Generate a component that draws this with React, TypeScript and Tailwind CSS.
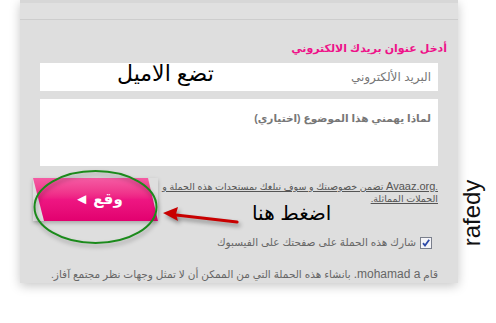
import React from 'react';

const AR = "font-['Liberation_Sans','DejaVu_Sans',sans-serif]";

function CheckBox() {
  return (
    <svg width="12" height="12" viewBox="0 0 12 12" className="shrink-0">
      <rect x="0.5" y="0.5" width="11" height="11" fill="#f4f4f8" stroke="#7a7f8c" />
      <path d="M3 6.2 L5 8.6 L9.2 2.8" fill="none" stroke="#2d4aa8" strokeWidth="1.8" />
    </svg>
  );
}

// green circle drawn around the sign button
function Ellipse() {
  return (
    <svg
      width="132"
      height="80"
      viewBox="0 0 132 80"
      className="absolute left-[30px] top-[168px] drop-shadow-[1px_3px_2px_rgba(0,0,0,0.3)]"
    >
      <ellipse cx="65.5" cy="39" rx="61" ry="36" fill="none" stroke="#1b8a1b" strokeWidth="2" />
    </svg>
  );
}

function Arrow() {
  return (
    <svg
      width="84"
      height="30"
      viewBox="0 0 84 30"
      className="absolute left-[160px] top-[200px] drop-shadow-[2px_3px_2px_rgba(0,0,0,0.4)]"
    >
      <path d="M16 15 L77 22" stroke="#c80000" strokeWidth="3.2" strokeLinecap="round" />
      <path d="M3 13 L18 7 L16 14 L18 21 Z" fill="#c80000" />
    </svg>
  );
}

export default function App() {
  return (
    <div className={`relative w-[496px] h-[323px] bg-white overflow-hidden ${AR}`}>
      <div className="ml-5 w-[438px] h-[283px] bg-[#dedede] shadow-[0_3px_10px_rgba(0,0,0,0.22)]">
        <div className="h-[3px] bg-[#d7d7d7]" />
        <div className="h-[17px] bg-[#e0e0e0] border-b border-[#cdcdcd]" />

        <div dir="rtl" className="px-5 pt-[20px]">
          <p className="-mr-[9px] text-[11px] leading-[16px] font-bold text-[#ee1289]">
            أدخل عنوان بريدك الالكتروني
          </p>

          <div className="mt-[7px] h-[28px] bg-white flex items-center pr-[7px]">
            <span className="text-[12px] text-[#777]">البريد الألكتروني</span>
          </div>

          <div className="mt-2 h-[67px] bg-white pr-[7px] pt-[6px]">
            <span className="text-[10.5px] font-bold text-[#777]">لماذا يهمني هذا الموضوع (اختياري)</span>
          </div>

          <div className="mt-3 flex justify-between items-start">
            <p className="mt-[3px] w-[278px] text-[9.5px] leading-[12px] text-[#555] underline">
              .<span className="text-[11px] leading-none">Avaaz.org</span> تضمن خصوصيتك و سوف نبلغك بمستجدات هذه الحملة و الحملات المماثلة.
            </p>
            <div className="-ml-[7px] h-[43px] w-[125px] shadow-[0_2px_4px_rgba(0,0,0,0.25)]">
              <div className="h-full w-full [clip-path:polygon(0_0,115px_0,125px_100%,11px_100%)] bg-gradient-to-b from-[#f45ba3] via-[#ee1682] to-[#e2006f] flex items-center justify-center pl-[6px]">
                <span className="text-white text-[15px] font-bold">وقع ◄</span>
              </div>
            </div>
          </div>

          <div className="mt-[14px] flex items-center gap-[4px] pr-[6px]">
            <CheckBox />
            <span className="text-[10.5px] text-[#666]">شارك هذه الحملة على صفحتك على الفيسبوك</span>
          </div>

          <p className="mt-[16px] text-[10.5px] leading-[14px] text-[#666]">
            قام <span className="text-[12px]">mohamad a.</span> بانشاء هذه الحملة التي من الممكن أن لا تمثل وجهات نظر مجتمع آفاز.
          </p>
        </div>
      </div>

      {/* annotations drawn over the screenshot */}
      <span className="absolute left-[117px] top-[60px] text-[22px] leading-[28px] text-black">تضع الاميل</span>
      <span className="absolute left-[252px] top-[202px] text-[20px] leading-[23px] text-black">اضغط هنا</span>
      <Ellipse />
      <Arrow />
      <div className="absolute left-[437px] top-[201px] w-[70px] h-[24px] -rotate-90 text-center text-[24px] leading-[24px] text-[#111] font-['Liberation_Sans',sans-serif]">
        rafedy
      </div>
    </div>
  );
}
